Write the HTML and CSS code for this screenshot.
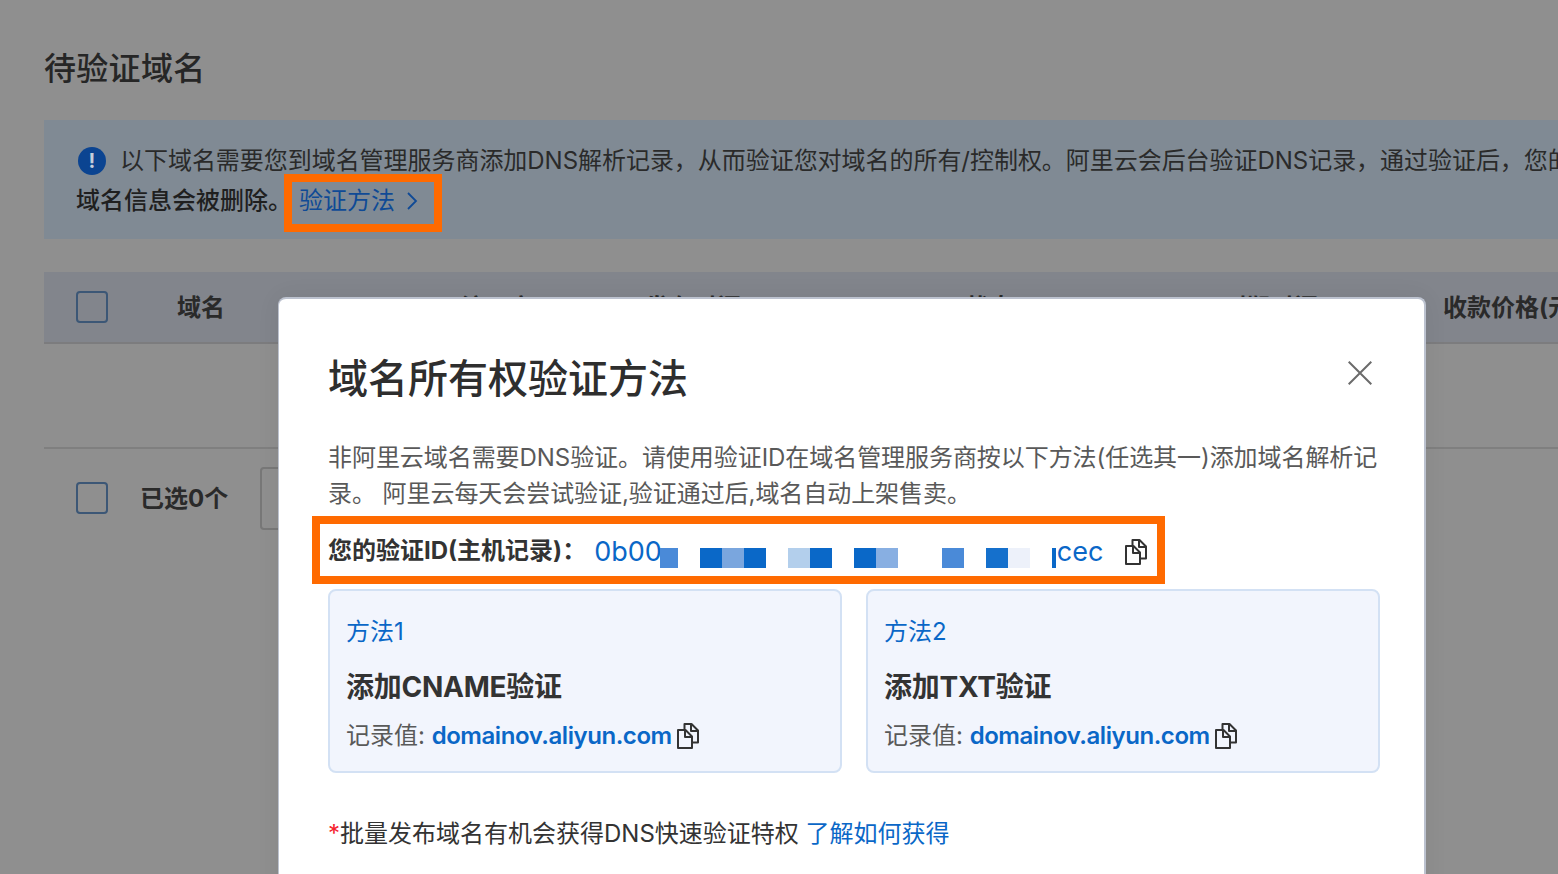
FILE: index.html
```html
<!DOCTYPE html>
<html lang="zh-CN">
<head>
<meta charset="utf-8">
<title>域名所有权验证方法</title>
<link rel="stylesheet" href="styles.css">
</head>
<body>
<svg class="defs" width="0" height="0" aria-hidden="true">
  <symbol id="copy" viewBox="0 0 22 26">
    <path d="M7.500 6V1h7L21 7.500V19.500H16" fill="none" stroke="currentColor" stroke-width="2" stroke-linejoin="round"/>
    <path d="M14 1.500V8h6.500" fill="none" stroke="currentColor" stroke-width="2" stroke-linejoin="round"/>
    <path d="M1 7h7.500L15 13.500V25H1z" fill="none" stroke="currentColor" stroke-width="2" stroke-linejoin="round"/>
    <path d="M8 7.500V14h6.500" fill="none" stroke="currentColor" stroke-width="2" stroke-linejoin="round"/>
  </symbol>
</svg>

<main class="page">
  <h1 class="page-title">待验证域名</h1>

  <section class="notice">
    <p class="notice-line"><span class="notice-icon">!</span><span class="notice-text">以下域名需要您到域名管理服务商添加DNS解析记录，从而验证您对域名的所有/控制权。阿里云会后台验证DNS记录，通过验证后，您的</span></p>
    <p class="notice-line notice-second">域名信息会被删除。<a class="notice-link">验证方法<svg class="chevron" viewBox="0 0 12 20"><path d="M2 2l8 8-8 8" fill="none" stroke="currentColor" stroke-width="1.800"/></svg></a></p>
    <span class="mark mark-link"></span>
  </section>

  <section class="table">
    <div class="table-head">
      <span class="check"></span>
      <span class="th th-name">域名</span>
      <span class="th th-a">注册商</span>
      <span class="th th-b">发布时间</span>
      <span class="th th-c">状态</span>
      <span class="th th-d">到期时间</span>
      <span class="th th-price">收款价格(元)</span>
    </div>
    <div class="table-empty"></div>
    <div class="table-foot">
      <span class="check"></span>
      <span class="selected">已选0个</span>
      <span class="batch-input"></span>
    </div>
  </section>
</main>

<div class="dialog">
  <header class="dialog-head">
    <h2 class="dialog-title">域名所有权验证方法</h2>
    <svg class="close" viewBox="0 0 24 24"><path d="M.7.7l22.600 22.600M23.300.7L.7 23.300" fill="none" stroke="currentColor" stroke-width="2"/></svg>
  </header>

  <p class="dialog-desc">非阿里云域名需要DNS验证。请使用验证ID在域名管理服务商按以下方法(任选其一)添加域名解析记录。 阿里云每天会尝试验证,验证通过后,域名自动上架售卖。</p>

  <div class="id-row">
    <span class="id-label">您的验证ID(主机记录)：</span>
    <span class="id-value">0b00</span>
    <span class="redact">
      <i class="px px-s c2"></i><i class="gap"></i>
      <i class="px c1"></i><i class="px c3"></i><i class="px c1"></i><i class="gap"></i>
      <i class="px c4"></i><i class="px c1"></i><i class="gap"></i>
      <i class="px c1"></i><i class="px c5"></i><i class="gap wide"></i>
      <i class="px c2"></i><i class="gap"></i>
      <i class="px c6"></i><i class="px c7"></i><i class="gap"></i>
      <i class="px px-t c1"></i>
    </span>
    <span class="id-value id-tail">cec</span>
    <svg class="copy copy-id"><use href="#copy"/></svg>
    <span class="mark mark-id"></span>
  </div>

  <div class="methods">
    <article class="method">
      <div class="method-no">方法1</div>
      <h3 class="method-title">添加CNAME验证</h3>
      <div class="method-value">记录值: <a class="domain">domainov.aliyun.com</a><svg class="copy"><use href="#copy"/></svg></div>
    </article>
    <article class="method">
      <div class="method-no">方法2</div>
      <h3 class="method-title">添加TXT验证</h3>
      <div class="method-value">记录值: <a class="domain">domainov.aliyun.com</a><svg class="copy"><use href="#copy"/></svg></div>
    </article>
  </div>

  <p class="tip"><span class="star">*</span>批量发布域名有机会获得DNS快速验证特权 <a class="learn">了解如何获得</a></p>
</div>
</body>
</html>
```
FILE: styles.css
```css
* { box-sizing: border-box; }
html, body { margin: 0; height: 100%; }
body {
  position: relative;
  height: 874px;
  overflow: hidden;
  background: #8f8f8f;
  color: #2b2b2b;
  font-family: Inter, "Noto Sans CJK SC", sans-serif;
  font-size: 24px;
}
.defs { position: absolute; }
h1, h2, h3, p { margin: 0; }

.page { padding: 48px 0 0 44px; width: 1558px; }
.page-title { font-size: 32px; line-height: 42px; font-weight: 500; color: #262626; letter-spacing: .3px; }

.notice {
  position: relative;
  margin-top: 30px;
  height: 119px;
  padding: 21px 0 0 32px;
  background: #808a94;
  color: #2a2a2a;
  overflow: hidden;
  line-height: 40px;
  white-space: nowrap;
}
.notice-line { display: flex; align-items: center; height: 40px; }
.notice-text { letter-spacing: -.04px; }
.notice-second { font-weight: 500; color: #1f1f1f; }
.notice-icon {
  flex: none;
  width: 28px;
  height: 28px;
  margin: 0 14px 0 2px;
  border-radius: 50%;
  background: #0b4491;
  color: #c5cedb;
  font-size: 20px;
  font-weight: 700;
  line-height: 28px;
  text-align: center;
}
.notice-link { display: inline-flex; align-items: center; margin-left: 7px; color: #0f4a96; font-weight: 400; }
.chevron { width: 12px; height: 20px; margin-left: 11px; }
.mark { position: absolute; border: 8px solid #ff6a00; pointer-events: none; }
.mark-link { left: 240px; top: 54px; width: 158px; height: 58px; }

.table { margin-top: 33px; }
.table-head {
  display: flex;
  align-items: center;
  height: 72px;
  padding-left: 32px;
  background: #82858c;
  border-bottom: 2px solid #7c7c7e;
  white-space: nowrap;
  overflow: hidden;
}
.check {
  flex: none;
  width: 32px;
  height: 32px;
  border: 2px solid #3c5776;
  border-radius: 4px;
}
.th { flex: none; margin-top: -4px; color: #2a2a2a; font-weight: 700; }
.th-name { margin-left: 69px; }
.th-a { margin-left: 236px; }
.th-b { margin-left: 112px; }
.th-c { margin-left: 224px; }
.th-d { margin-left: 209px; }
.th-price { margin-left: 125px; }
.table-empty { height: 105px; border-bottom: 2px solid #7f7f7f; }
.table-foot { display: flex; align-items: center; height: 98px; padding: 0 0 0 32px; }
.selected { margin: -4px 0 0 32px; font-weight: 700; color: #2a2a2a; }
.batch-input {
  width: 60px;
  height: 63px;
  margin-left: 32px;
  border: 2px solid #787878;
  border-radius: 4px 0 0 4px;
}

.dialog {
  position: absolute;
  left: 278px;
  top: 297px;
  width: 1148px;
  height: 640px;
  padding: 0 44px 0 49px;
  background: #fff;
  border: 2px solid #bcc2cf;
  border-width: 2px 2px 0 1px;
  border-radius: 8px 8px 0 0;
  box-shadow: 0 0 24px rgba(0, 0, 0, .06);
  color: #333;
}
.dialog-head { display: flex; justify-content: space-between; align-items: center; padding-top: 51px; height: 109px; }
.dialog-title { font-size: 40px; line-height: 58px; font-weight: 500; color: #2e2e2e; }
.close { width: 24px; height: 24px; margin: -12px 8px 0 0; color: #6b6b6b; }
.dialog-desc { margin: 32px -4px 0 0; line-height: 36px; color: #595959; letter-spacing: -.06px; }

.id-row { position: relative; display: flex; align-items: center; height: 40px; margin-top: 16px; white-space: nowrap; }
.id-label { font-weight: 700; color: #333; }
.id-value { margin: 6px 0 0 8px; font-size: 27px; color: #0a67c7; }
.redact { display: flex; align-items: flex-end; height: 20px; margin: 20px 0 0 -2px; flex: none; }
.px { display: block; width: 22px; height: 20px; }
.px-s { width: 18px; }
.px-t { width: 4px; }
.gap { display: block; width: 22px; }
.wide { width: 44px; }
.c1 { background: #0a68c8; }
.c2 { background: #4a8ad8; }
.c3 { background: #7aa6de; }
.c4 { background: #b3cfec; }
.c5 { background: #88afe2; }
.c6 { background: #1570cc; }
.c7 { background: #edf1fa; }
.id-tail { margin-left: 1px; }
.copy { display: block; flex: none; width: 22px; height: 26px; color: #333; }
.copy-id { margin: 8px 0 0 22px; }
.mark-id { left: -16px; top: -12px; width: 853px; height: 68px; }

.methods { display: grid; grid-template-columns: 514px 514px; gap: 24px; margin-top: 21px; }
.method {
  height: 184px;
  padding: 23px 16px 0;
  background: #f2f5fd;
  border: 2px solid #d3e1f4;
  border-radius: 8px;
}
.method-no { line-height: 36px; color: #0a67c7; font-size: 24px; }
.method-title { margin-top: 17px; font-size: 28px; line-height: 40px; font-weight: 700; color: #333; letter-spacing: -.25px; }
.method-value { display: flex; align-items: center; margin-top: 11px; line-height: 36px; color: #595959; white-space: pre; }
.domain { color: #0a67c7; font-weight: 600; letter-spacing: -.45px; }
.method-value .copy { margin-left: 5px; }

.tip { margin-top: 43px; line-height: 36px; color: #333; }
.star { color: #f5222d; }
.learn { color: #0a67c7; }
```
